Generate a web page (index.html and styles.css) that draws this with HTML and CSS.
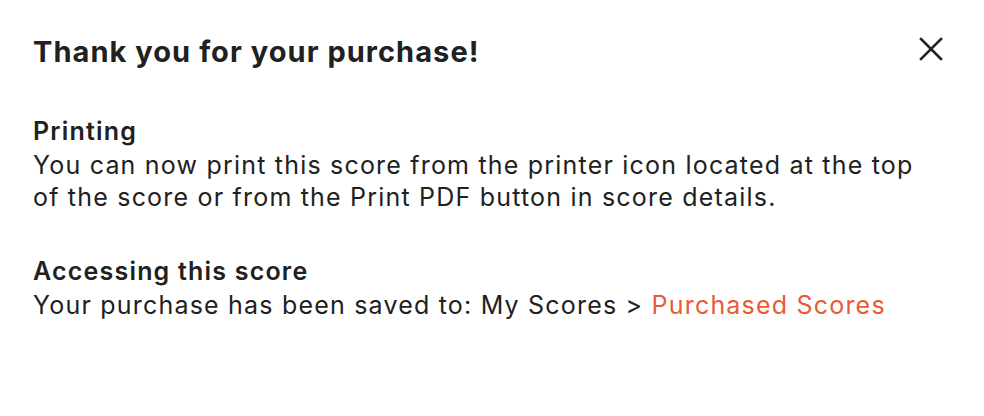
FILE: index.html
```html
<!DOCTYPE html>
<html>
<head>
<meta charset="utf-8">
<link rel="stylesheet" href="styles.css">
</head>
<body>
<div class="modal">
  <div class="header">
    <h1 class="title">Thank you for your purchase!</h1>
    <button class="close" aria-label="Close">
      <svg width="24" height="24" viewBox="0 0 24 24"><path d="M2 2L22 22M22 2L2 22" stroke="#222" stroke-width="2.6" stroke-linecap="square" fill="none"/></svg>
    </button>
  </div>
  <section class="section first">
    <h2 class="sub">Printing</h2>
    <p class="text">You can now print this score from the printer icon located at the top of the score or from the Print PDF button in score details.</p>
  </section>
  <section class="section">
    <h2 class="sub">Accessing this score</h2>
    <p class="text">Your purchase has been saved to: My Scores &gt; <a class="link" href="#">Purchased Scores</a></p>
  </section>
</div>
</body>
</html>
```
FILE: styles.css
```css
html, body { margin: 0; padding: 0; background: #fff; }
body { font-family: Inter, "Liberation Sans", sans-serif; color: #212121; }
.modal { width: 984px; height: 416px; box-sizing: border-box; padding: 30px 33px; }
.header { display: flex; justify-content: space-between; align-items: flex-start; }
.title { margin: 0; font-size: 29px; font-weight: 700; line-height: 44px; letter-spacing: 1.05px; }
.close { background: none; border: 0; padding: 0; margin: 7px 8px 0 0; width: 24px; height: 24px; cursor: pointer; }
.close svg { display: block; }
.section { margin-top: 41px; }
.section.first { margin-top: 40px; }
.sub { margin: 0; font-size: 25px; font-weight: 600; line-height: 35px; letter-spacing: 1.2px; }
.text { margin: 0; font-size: 25px; font-weight: 400; line-height: 32px; letter-spacing: 1.2px; max-width: 900px; }
.link { color: #ea5a35; text-decoration: none; }
```
